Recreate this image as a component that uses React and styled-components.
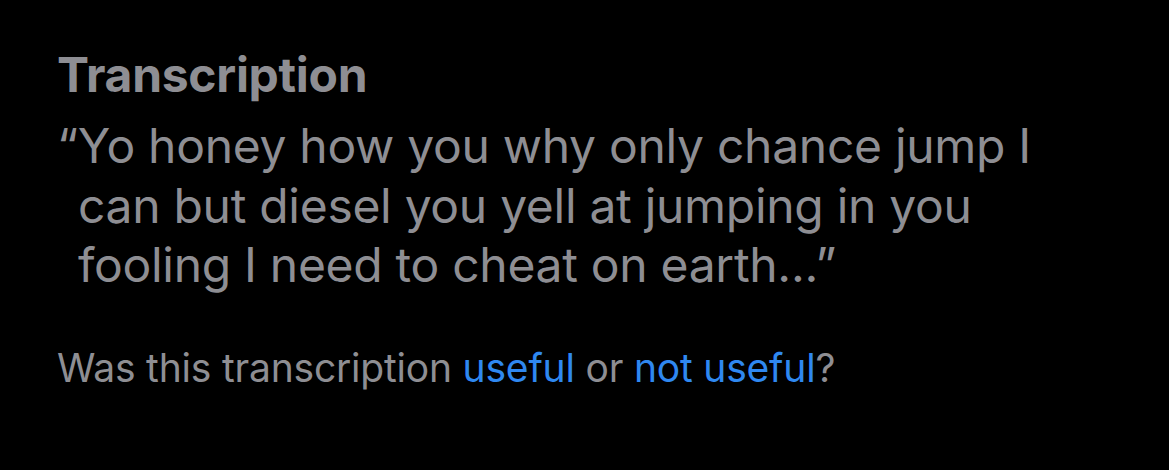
import React from "react";
import styled, { createGlobalStyle } from "styled-components";

const GlobalStyle = createGlobalStyle`
  html, body {
    margin: 0;
    padding: 0;
    background: #000;
  }
  body {
    font-family: Inter, "Liberation Sans", sans-serif;
    -webkit-font-smoothing: antialiased;
  }
`;

const App = () => {
  return (
    <>
      <GlobalStyle />
      <Page>
        <Title>Transcription</Title>
        <Quote>
          <QuoteMark>“</QuoteMark>Yo honey how you why only chance jump I can
          but diesel you yell at jumping in you fooling I need to cheat on
          earth...”
        </Quote>
        <Feedback>
          Was this transcription <FeedbackLink>useful</FeedbackLink> or{" "}
          <FeedbackLink>not useful</FeedbackLink>?
        </Feedback>
      </Page>
    </>
  );
};

export default App;

const Page = styled.div`
  width: 1169px;
  height: 470px;
  box-sizing: border-box;
  background: #000;
  padding: 47px 0 0 57px;
  color: #8e8e93;
`;

const Title = styled.h1`
  margin: 0;
  font-size: 48px;
  font-weight: 700;
  line-height: 56px;
  letter-spacing: -0.3px;
  color: #8e8e93;
`;

const Quote = styled.p`
  margin: 13px 0 0;
  width: 1000px;
  font-size: 48px;
  font-weight: 400;
  line-height: 59.5px;
  letter-spacing: -0.3px;
  padding-left: 21px;
  text-indent: -21px;
`;

const QuoteMark = styled.span``;

const Feedback = styled.p`
  margin: 51px 0 0;
  font-size: 39px;
  font-weight: 400;
  line-height: 44px;
  letter-spacing: -0.2px;
`;

const FeedbackLink = styled.span`
  color: #2f88f0;
`;
